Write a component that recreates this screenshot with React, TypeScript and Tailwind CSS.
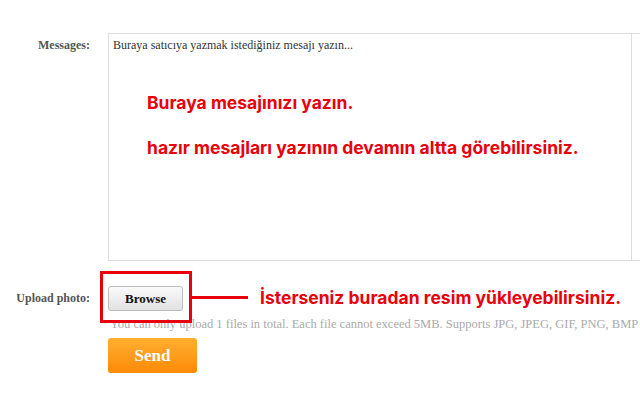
import React from "react";

export default function App() {
  return (
    <div className="relative w-[640px] h-[417px] overflow-hidden bg-white font-['Liberation_Serif',serif] text-[#333]">
      {/* Messages row */}
      <div className="flex pt-[33px]">
        <div className="w-[90px] shrink-0 pt-[3px] text-right text-[12px] font-bold text-[#555]">
          Messages:
        </div>
        <div className="ml-[18px] flex h-[228px] w-[560px] shrink-0 border border-[#ddd]">
          <div className="w-[522px] shrink-0 px-[4px] pt-[4px]">
            <p className="text-[12px] leading-[14px] text-[#333]">
              Buraya satıcıya yazmak istediğiniz mesajı yazın...
            </p>
            <div className="pl-[34px] pt-[41px] font-['Inter',sans-serif] text-[17.5px] font-bold leading-[20px] text-[#e8000b]">
              <p>Buraya mesajınızı yazın.</p>
              <p className="mt-[25px]">hazır mesajları yazının devamın altta görebilirsiniz.</p>
            </div>
          </div>
          <div className="w-[16px] shrink-0 border-l border-[#ddd]" />
        </div>
      </div>

      {/* Upload row */}
      <div className="mt-[24px] flex items-center">
        <div className="w-[90px] shrink-0 text-right text-[12px] font-bold text-[#555]">
          Upload photo:
        </div>
        <div className="relative ml-[18px]">
          <button className="h-[25px] w-[75px] rounded-[3px] border border-[#bbb] bg-gradient-to-b from-[#fafafa] to-[#e2e2e2] text-[13px] font-bold text-[#111]">
            Browse
          </button>
          <div className="absolute left-[-8px] top-[-15px] h-[52px] w-[92px] border-[3px] border-[#e8000b]" />
        </div>
        <div className="ml-[9px] mb-[2px] h-[3px] w-[56px] bg-[#e8000b]" />
        <div className="ml-[12px] whitespace-nowrap font-['Inter',sans-serif] text-[17.5px] font-bold text-[#e8000b]">
          İsterseniz buradan resim yükleyebilirsiniz.
        </div>
      </div>

      <p className="ml-[110px] mt-[6px] w-[530px] overflow-hidden whitespace-nowrap text-[12.5px] leading-[15px] text-[#aaa]">
        You can only upload 1 files in total. Each file cannot exceed 5MB. Supports JPG, JPEG, GIF, PNG, BMP
      </p>

      <button className="ml-[108px] mt-[6px] h-[35px] w-[89px] rounded-[3px] bg-gradient-to-b from-[#ffae2e] to-[#ff8a00] text-[17px] font-bold text-white">
        Send
      </button>
    </div>
  );
}
